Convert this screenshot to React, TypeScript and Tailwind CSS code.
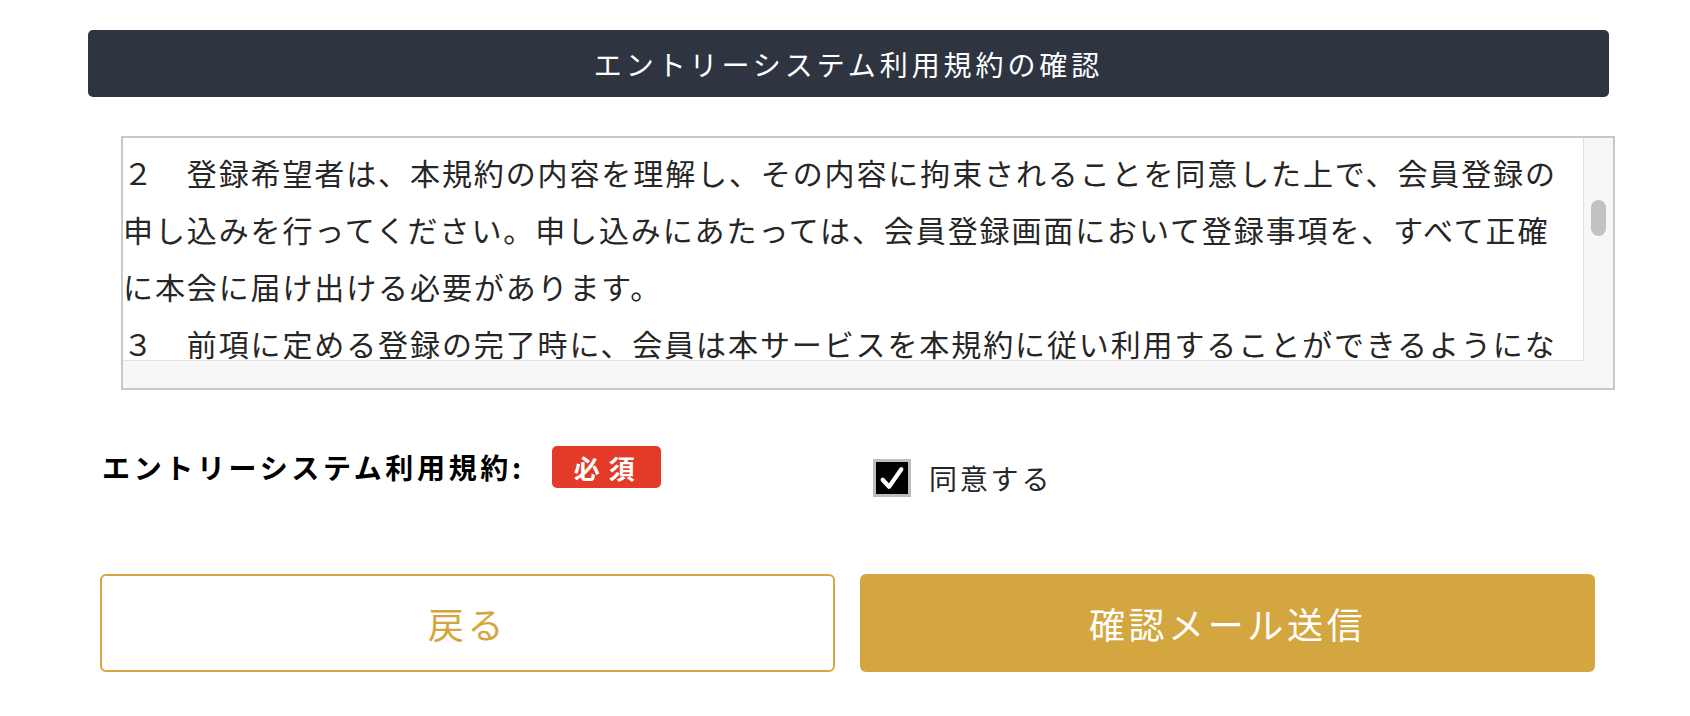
const lines = [
  "２　登録希望者は、本規約の内容を理解し、その内容に拘束されることを同意した上で、会員登録の",
  "申し込みを行ってください。申し込みにあたっては、会員登録画面において登録事項を、すべて正確",
  "に本会に届け出ける必要があります。",
  "３　前項に定める登録の完了時に、会員は本サービスを本規約に従い利用することができるようにな",
  "ります。",
];

function TermsBox() {
  return (
    <div className="ml-[121px] mt-[39px] flex h-[254px] w-[1494px] border-2 border-[#c8c8c8] bg-[#f7f7f7]">
      <div className="flex flex-1 flex-col">
        <div className="h-[223px] overflow-hidden border-r border-b border-[#e2e2e2] bg-white pt-[6px] text-[30px] leading-[57px] tracking-[0.063em] text-[#262626]">
          {lines.map(line => (
            <div key={line} className="whitespace-nowrap">
              {line}
            </div>
          ))}
        </div>
      </div>
      <div className="flex w-[29px] justify-center pt-[62px]">
        <div className="h-[36px] w-[15px] rounded-full bg-[#c2c2c2]" />
      </div>
    </div>
  );
}

function AgreeRow() {
  return (
    <div className="mt-[56px] flex pl-[102px]">
      <div className="flex w-[771px] items-start gap-[27px]">
        <span className="text-[28px] leading-[42px] font-bold tracking-[0.13em] text-black">エントリーシステム利用規約:</span>
        <span className="flex h-[42px] items-center rounded-[5px] bg-[#e43b28] pl-[22px] pr-[17px] text-[26px] font-bold tracking-[0.35em] text-white">
          必須
        </span>
      </div>
      <label className="mt-[13px] flex h-[38px] items-center gap-[18px]">
        <span className="grid h-[38px] w-[38px] place-items-center border-[3px] border-[#bdbdbd] bg-black">
          <svg viewBox="0 0 24 24" className="h-[28px] w-[28px]" aria-hidden="true">
            <polyline points="4,13.5 9.5,19.5 20,4.5" fill="none" stroke="white" strokeWidth="3.6" strokeLinecap="round" strokeLinejoin="round" />
          </svg>
        </span>
        <span className="text-[28px] tracking-[0.1em] text-[#262626]">同意する</span>
      </label>
    </div>
  );
}

export default function App() {
  return (
    <div className="h-[716px] w-[1690px] bg-white pt-[30px] font-['Noto_Sans_CJK_JP','Noto_Sans',sans-serif]">
      <div className="ml-[88px] flex h-[67px] w-[1521px] items-center justify-center rounded-[5px] bg-[#2e3440] text-[28px] tracking-[0.14em] text-white">
        エントリーシステム利用規約の確認
      </div>

      <TermsBox />
      <AgreeRow />

      <div className="mt-[77px] flex gap-[25px] pl-[100px]">
        <button className="flex h-[98px] w-[735px] items-center justify-center rounded-[6px] border-2 border-[#d4a63f] bg-white text-[36px] tracking-[0.1em] text-[#d4a63f]">
          戻る
        </button>
        <button className="flex h-[98px] w-[735px] items-center justify-center rounded-[6px] bg-[#d4a63f] text-[36px] tracking-[0.1em] text-white">
          確認メール送信
        </button>
      </div>
    </div>
  );
}
